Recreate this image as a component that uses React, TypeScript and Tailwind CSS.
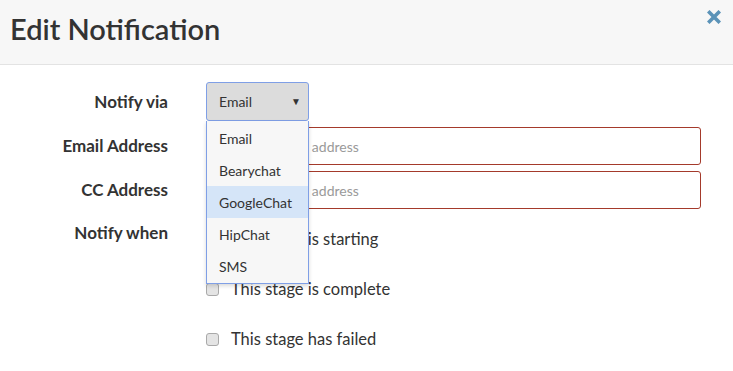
const options = ["Email", "Bearychat", "GoogleChat", "HipChat", "SMS"];

const Checkbox = ({ label }: { label: string }) => (
  <label className="flex h-[50px] items-center gap-[12px] text-[16.5px] text-[#333]">
    <span className="h-[13px] w-[13px] rounded-[3px] border border-[#a9a9a9] bg-[#e4e4e4]" />
    <span>{label}</span>
  </label>
);

const App = () => {
  return (
    <div className="h-[371px] w-[733px] overflow-hidden bg-white font-['Lato',sans-serif] text-[#333]">
      <div className="flex h-[65px] items-start justify-between border-b border-[#e3e3e3] bg-[#f7f7f7] pl-[10px] pr-[12px]">
        <h2 className="mt-[11px] text-[29px] font-semibold leading-[36px] text-[#333]">Edit Notification</h2>
        <svg className="mt-[10px]" width="14" height="14" viewBox="0 0 14 14">
          <path d="M2.5 2.5 L11.5 11.5 M11.5 2.5 L2.5 11.5" stroke="#5b93b8" strokeWidth="3.6" strokeLinecap="square" />
        </svg>
      </div>

      <div className="grid grid-cols-[168px_1fr] gap-x-[38px] pr-[32px] pt-[17px]">
        <div className="flex h-[39px] items-center justify-end text-[17px] font-bold">Notify via</div>
        <div className="relative">
          <div className="flex h-[39px] w-[103px] items-center justify-between rounded-[3px] border border-[#7f9fe6] bg-[#dcdcdc] pl-[12px] pr-[7px] text-[14px] text-[#333]">
            <span>Email</span>
            <span className="text-[10px]">▼</span>
          </div>
          <ul className="absolute left-0 top-[39px] z-10 w-[103px] border border-t-0 border-[#7f9fe6] bg-[#f7f7f7] py-[1px] text-[14px] text-[#333] shadow-[0_2px_4px_rgba(0,0,0,0.15)]">
            {options.map((o) => (
              <li
                key={o}
                className={
                  o === "GoogleChat"
                    ? "flex h-[32px] items-center bg-[#d5e5f8] pl-[12px]"
                    : "flex h-[32px] items-center pl-[12px]"
                }
              >
                {o}
              </li>
            ))}
          </ul>
        </div>

        <div className="mt-[6px] flex h-[38px] items-center justify-end text-[17px] font-bold">Email Address</div>
        <div className="mt-[6px] flex h-[38px] items-center rounded-[3px] border border-[#a43a2b] pl-[14px] text-[14px] text-[#9a9a9a]">
          Enter an email address
        </div>

        <div className="mt-[6px] flex h-[38px] items-center justify-end text-[17px] font-bold">CC Address</div>
        <div className="mt-[6px] flex h-[38px] items-center rounded-[3px] border border-[#a43a2b] pl-[14px] text-[14px] text-[#9a9a9a]">
          Enter an email address
        </div>

        <div className="mt-[11px] flex h-[26px] items-center justify-end text-[17px] font-bold">Notify when</div>
        <div className="mt-[5px] flex flex-col">
          <Checkbox label="This stage is starting" />
          <Checkbox label="This stage is complete" />
          <Checkbox label="This stage has failed" />
        </div>
      </div>
    </div>
  );
};

export default App;
